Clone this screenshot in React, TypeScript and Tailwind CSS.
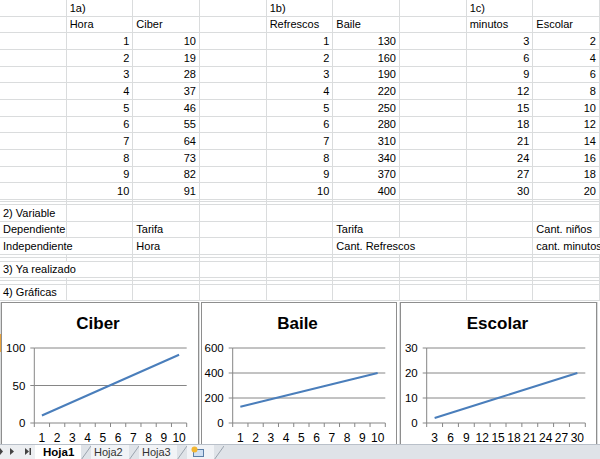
import React from 'react';

const GRID = 'border-[#dadcdd]';

type Cell = { t?: string | number; right?: boolean; spill?: boolean };
type Row = { h: string; cells: Record<number, Cell> };

// column letters -> index: A0 B1 C2 D3 E4 F5 G6 H7 I8
const dataRows: Row[] = [];

dataRows.push({ h: 'h-[16.67px]', cells: { 1: { t: '1a)' }, 4: { t: '1b)' }, 7: { t: '1c)' } } });
dataRows.push({
  h: 'h-[16.67px]',
  cells: {
    1: { t: 'Hora' },
    2: { t: 'Ciber' },
    4: { t: 'Refrescos' },
    5: { t: 'Baile' },
    7: { t: 'minutos' },
    8: { t: 'Escolar' },
  },
});
for (let i = 1; i <= 10; i++) {
  dataRows.push({
    h: 'h-[16.67px]',
    cells: {
      1: { t: i, right: true },
      2: { t: 9 * i + 1, right: true },
      4: { t: i, right: true },
      5: { t: 30 * i + 100, right: true },
      7: { t: 3 * i, right: true },
      8: { t: 2 * i, right: true },
    },
  });
}
dataRows.push({ h: 'h-[2.5px]', cells: {} });
dataRows.push({ h: 'h-[2.5px]', cells: {} });
dataRows.push({ h: 'h-[16.67px]', cells: { 0: { t: '2) Variable' } } });
dataRows.push({
  h: 'h-[16.67px]',
  cells: { 0: { t: 'Dependiente' }, 2: { t: 'Tarifa' }, 5: { t: 'Tarifa' }, 8: { t: 'Cant. niños' } },
});
dataRows.push({
  h: 'h-[16.67px]',
  cells: {
    0: { t: 'Independiente', spill: true },
    2: { t: 'Hora' },
    5: { t: 'Cant. Refrescos', spill: true },
    8: { t: 'cant. minutos', spill: true },
  },
});
dataRows.push({ h: 'h-[3.33px]', cells: {} });
dataRows.push({ h: 'h-[3.33px]', cells: {} });
dataRows.push({ h: 'h-[16.67px]', cells: { 0: { t: '3) Ya realizado', spill: true } } });
dataRows.push({ h: 'h-[3.33px]', cells: {} });
dataRows.push({ h: 'h-[3.33px]', cells: {} });
dataRows.push({ h: 'h-[16.67px]', cells: { 0: { t: '4) Gráficas' } } });

function SheetRow({ row }: { row: Row }) {
  return (
    <div className={`grid grid-cols-9 ${row.h}`}>
      {Array.from({ length: 9 }).map((_, c) => {
        const cell = row.cells[c];
        return (
          <div
            key={c}
            className={`relative flex items-end border-b ${GRID} ${cell?.spill ? 'z-10' : 'border-r'} ${
              cell?.right ? 'justify-end pr-[3px]' : 'pl-[3px]'
            }`}
          >
            {cell?.t !== undefined && (
              <span className="whitespace-nowrap bg-white pb-[1px] text-[11px] leading-[13px] text-black">
                {cell.t}
              </span>
            )}
          </div>
        );
      })}
    </div>
  );
}

type ChartProps = {
  title: string;
  width: number;
  titleX: number;
  plotL: number;
  plotR: number;
  max: number;
  step: number;
  values: number[];
  labels: (string | number)[];
};

function LineChart({ title, width, titleX, plotL, plotR, max, step, values, labels }: ChartProps) {
  const top = 45;
  const bottom = 120;
  const n = values.length;
  const cw = (plotR - plotL) / n;
  const yOf = (v: number) => bottom - (v / max) * (bottom - top);
  const ticks: number[] = [];
  for (let v = 0; v <= max; v += step) ticks.push(v);
  const pts = values.map((v, i) => `${plotL + cw * (i + 0.5)},${yOf(v)}`).join(' ');

  return (
    <div className="h-full border-x border-t border-[#8e8e8e] bg-white" style={{ width }}>
      <svg width={width - 2} height={141} className="block" fontFamily="'Liberation Sans', Arial, sans-serif">
        <text x={titleX} y={25.5} textAnchor="middle" fontSize={17} fontWeight={700} fill="#000">
          {title}
        </text>
        {ticks.map((v) => (
          <g key={v}>
            {v > 0 && <line x1={plotL} x2={plotR} y1={yOf(v)} y2={yOf(v)} stroke="#868686" strokeWidth={1} />}
            <line x1={plotL - 4} x2={plotL} y1={yOf(v)} y2={yOf(v)} stroke="#868686" strokeWidth={1} />
            <text x={plotL - 9} y={yOf(v) + 4} textAnchor="end" fontSize={11.5} fill="#000">
              {v}
            </text>
          </g>
        ))}
        <line x1={plotL} x2={plotL} y1={top} y2={bottom} stroke="#868686" strokeWidth={1} />
        <line x1={plotL} x2={plotR} y1={bottom} y2={bottom} stroke="#868686" strokeWidth={1} />
        {Array.from({ length: n + 1 }).map((_, i) => (
          <line
            key={i}
            x1={plotL + cw * i}
            x2={plotL + cw * i}
            y1={bottom}
            y2={bottom + 4}
            stroke="#868686"
            strokeWidth={1}
          />
        ))}
        {labels.map((l, i) => (
          <text key={i} x={plotL + cw * (i + 0.5)} y={139} textAnchor="middle" fontSize={12} fill="#000">
            {l}
          </text>
        ))}
        <polyline points={pts} fill="none" stroke="#4a7ebb" strokeWidth={2} strokeLinejoin="round" />
      </svg>
    </div>
  );
}

function Slant() {
  return (
    <svg width={10} height={15} className="block shrink-0">
      <line x1={0} y1={15} x2={10} y2={1} stroke="#9aa3ae" strokeWidth={1} />
    </svg>
  );
}

function Tabs() {
  return (
    <div className="flex h-[15px] items-stretch border-t border-[#b9c0c9] bg-[#dfe3e8] text-[11px] leading-[14px] text-[#333]">
      <div className="flex w-[35px] items-center gap-[7px] bg-[#eceef1] pl-0">
        <svg width={3} height={7} className="block">
          <path d="M0 0 L3 3.5 L0 7 Z" fill="#444" />
        </svg>
        <svg width={4} height={7} className="block">
          <path d="M0 0 L4 3.5 L0 7 Z" fill="#444" />
        </svg>
        <svg width={6} height={7} className="ml-[4px] block">
          <path d="M0 0 L4 3.5 L0 7 Z" fill="#444" />
          <rect x={4.5} y={0} width={1.5} height={7} fill="#444" />
        </svg>
      </div>
      <div className="flex w-[46px] items-center bg-white pl-[8px] text-[11.5px] font-bold text-black">Hoja1</div>
      <Slant />
      <div className="flex w-[38px] items-center bg-[#f1f3f6] pl-[3px]">Hoja2</div>
      <Slant />
      <div className="flex w-[38px] items-center bg-[#f1f3f6] pl-[3px]">Hoja3</div>
      <Slant />
      <div className="flex w-[27px] items-center bg-[#f1f3f6] pl-[4px]">
        <svg width={13} height={11} className="block">
          <rect x={2.5} y={3.5} width={10} height={7} fill="#cfe0f3" stroke="#5b7fa8" strokeWidth={1} />
          <circle cx={3.5} cy={3.5} r={3} fill="#f2b632" />
        </svg>
      </div>
      <Slant />
      <div className="flex-1" />
    </div>
  );
}

export default function App() {
  return (
    <div className="relative h-[459px] w-[600px] overflow-hidden bg-white font-['Liberation_Sans',Arial,sans-serif]">
      {dataRows.map((r, i) => (
        <SheetRow key={i} row={r} />
      ))}

      {/* charts area */}
      <div className="flex h-[142.33px] items-stretch pt-[0.6px]">
        <div className={`w-[1px] border-r ${GRID}`} />
        <LineChart
          title="Ciber"
          width={198}
          titleX={96}
          plotL={32.3}
          plotR={184.7}
          max={100}
          step={50}
          values={[10, 19, 28, 37, 46, 55, 64, 73, 82, 91]}
          labels={[1, 2, 3, 4, 5, 6, 7, 8, 9, 10]}
        />
        <div className={`w-[2px] border-l ${GRID}`} />
        <LineChart
          title="Baile"
          width={196}
          titleX={95.5}
          plotL={30.7}
          plotR={183.3}
          max={600}
          step={200}
          values={[130, 160, 190, 220, 250, 280, 310, 340, 370, 400]}
          labels={[1, 2, 3, 4, 5, 6, 7, 8, 9, 10]}
        />
        <div className={`w-[3px] border-r ${GRID}`} />
        <LineChart
          title="Escolar"
          width={197}
          titleX={96.5}
          plotL={25.7}
          plotR={184.3}
          max={30}
          step={10}
          values={[2, 4, 6, 8, 10, 12, 14, 16, 18, 20]}
          labels={[3, 6, 9, 12, 15, 18, 21, 24, 27, 30]}
        />
        <div className={`flex-1 border-l ${GRID}`} />
      </div>

      <Tabs />

      {/* active row marker peeking at the left edge */}
      <div className="absolute left-0 top-[334px] h-[18px] w-[1px] bg-[#e8a33d]" />
    </div>
  );
}
